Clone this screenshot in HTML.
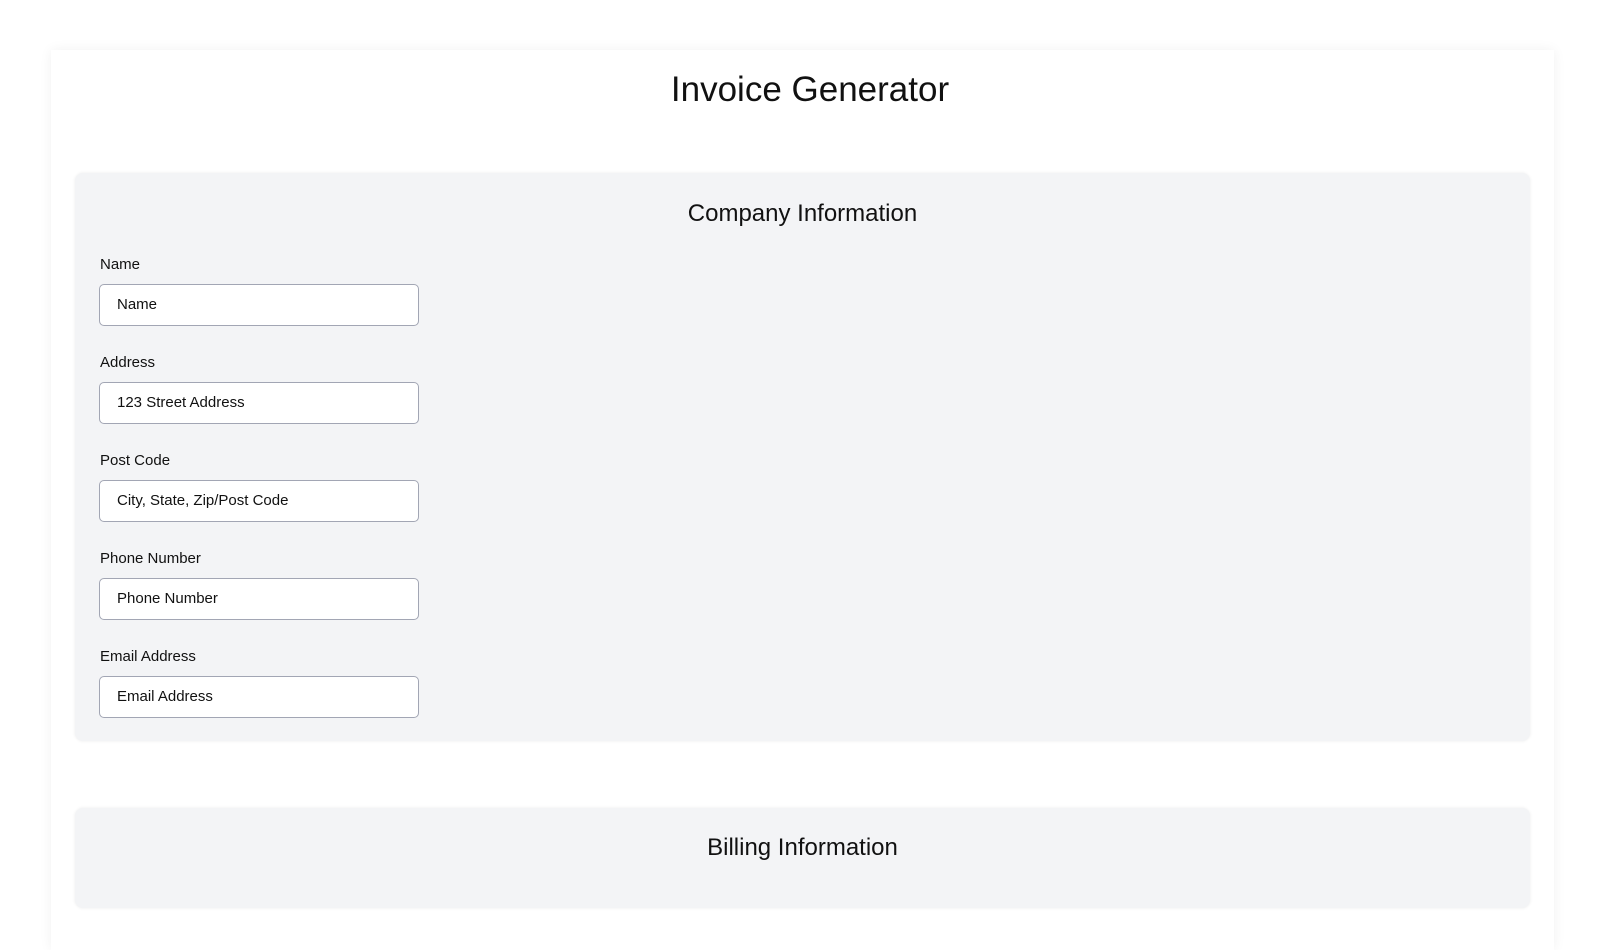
<!DOCTYPE html>
<html><head><style>
html,body{margin:0;padding:0;background:#fff;font-family:"Liberation Sans",Arial,sans-serif;color:#111;}
body{width:1620px;height:866px;overflow:hidden;position:relative;}
.container{position:absolute;left:51px;top:50px;width:1503px;height:900px;background:#fff;box-shadow:0 0 12px rgba(0,0,0,0.06);}
h1{position:absolute;left:0;right:0;top:66px;margin:0;text-align:center;font-weight:400;font-size:35px;line-height:48px;}
.panel{position:absolute;left:75px;width:1455px;background:#f3f4f6;border-radius:8px;box-shadow:0 0 3px rgba(0,0,0,0.08);}
.panel h2{position:absolute;left:0;right:0;margin:0;text-align:center;font-weight:400;font-size:24px;line-height:30px;}
.lbl{position:absolute;left:100px;font-size:15px;line-height:18px;}
.inp{position:absolute;left:99px;width:301px;height:40px;background:#fff;border:1px solid #a2a6b4;border-radius:5px;font-size:15px;line-height:40px;padding-left:17px;box-sizing:content-box;}
</style></head><body>
<div class="container"></div>
<h1>Invoice Generator</h1>
<div class="panel" style="top:173px;height:568px;"><h2 style="top:26px;">Company Information</h2></div>
<div class="lbl" style="top:256px;">Name</div>
<div class="inp" style="top:284px;">Name</div>
<div class="lbl" style="top:354px;">Address</div>
<div class="inp" style="top:382px;">123 Street Address</div>
<div class="lbl" style="top:452px;">Post Code</div>
<div class="inp" style="top:480px;">City, State, Zip/Post Code</div>
<div class="lbl" style="top:550px;">Phone Number</div>
<div class="inp" style="top:578px;">Phone Number</div>
<div class="lbl" style="top:648px;">Email Address</div>
<div class="inp" style="top:676px;">Email Address</div>
<div class="panel" style="top:808px;height:100px;"><h2 style="top:25px;">Billing Information</h2></div>
</body></html>
